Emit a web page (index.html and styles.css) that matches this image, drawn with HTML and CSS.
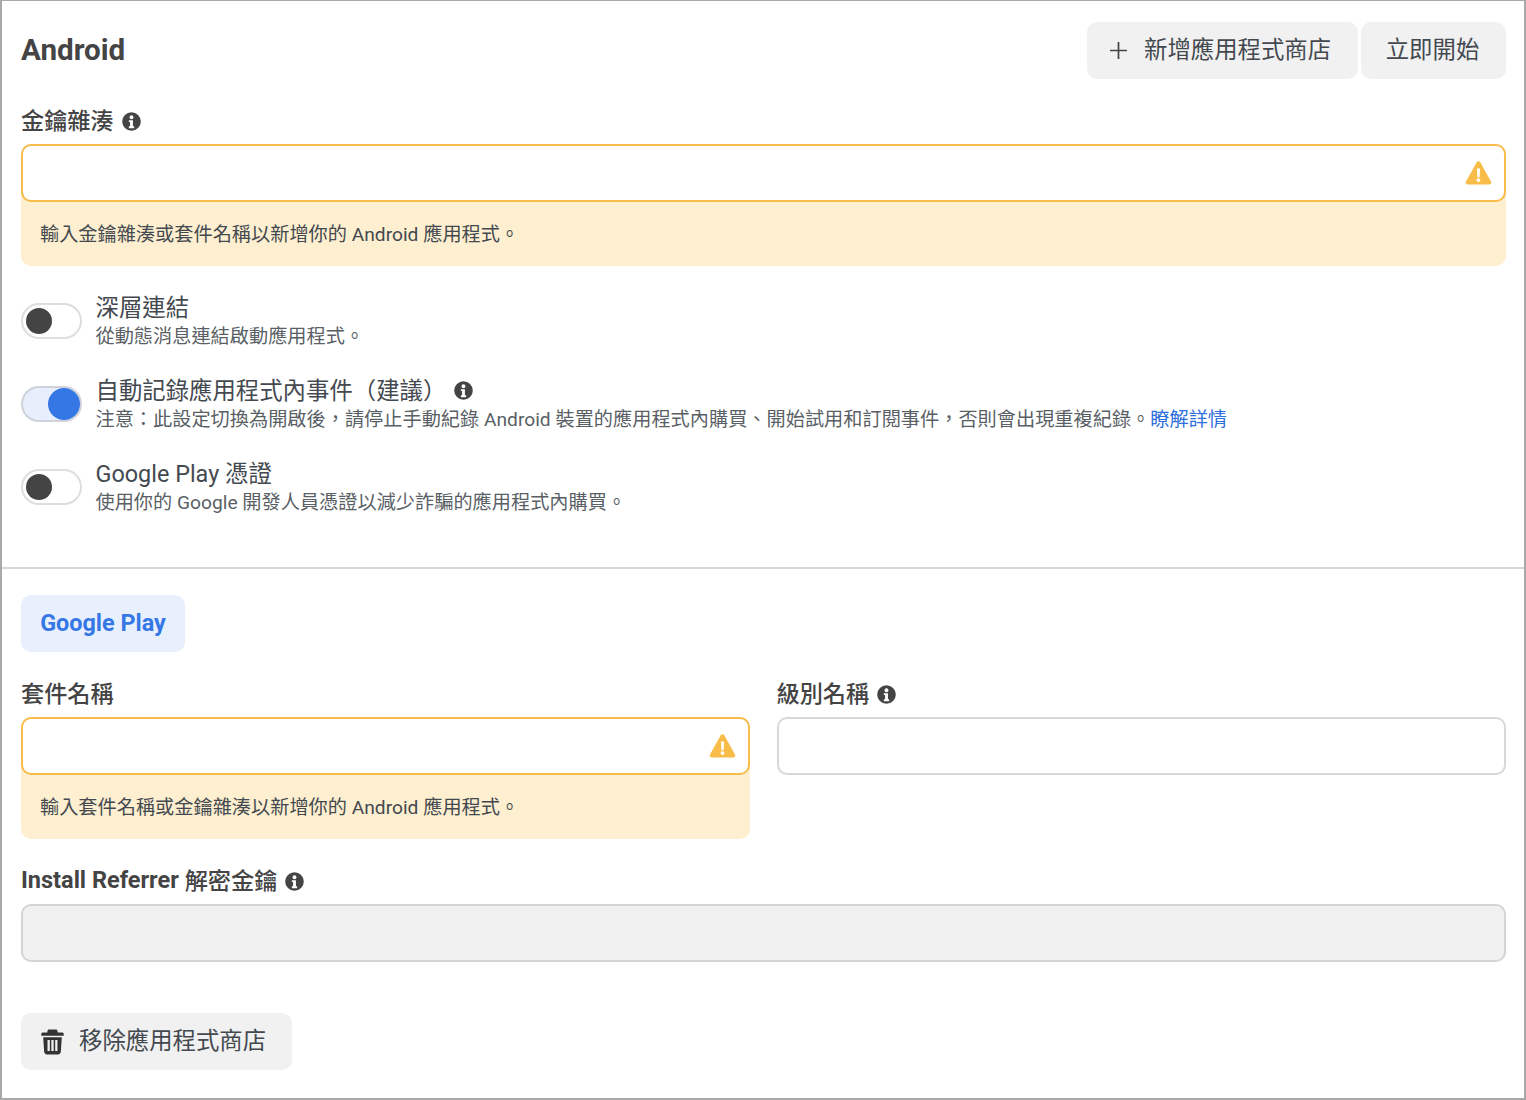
FILE: index.html
```html
<!DOCTYPE html>
<html lang="zh-Hant">
<head>
<meta charset="utf-8">
<title>Android</title>
<link rel="stylesheet" href="styles.css">
</head>
<body>
<svg class="defs" width="0" height="0" aria-hidden="true">
  <symbol id="info" viewBox="0 0 20 20"><path fill-rule="evenodd" d="M10 .2a9.800 9.800 0 1 1 0 19.600A9.800 9.800 0 0 1 10 .2ZM10 3.300a2.100 2.100 0 1 0 0 4.200 2.100 2.100 0 0 0 0-4.200ZM7.200 8.700v1.900h1.300v4.500H7.200V17h5.600v-1.900h-1.300V8.700Z"/></symbol>
  <symbol id="warn" viewBox="0 0 26 24"><path fill-rule="evenodd" d="M11.200 1.300a2.100 2.100 0 0 1 3.600 0l10.700 19.300c.7 1.300-.2 2.900-1.800 2.900H2.300c-1.600 0-2.500-1.600-1.800-2.900ZM11.400 7.500l.5 8.700h2.200l.5-8.700ZM13 17.200a1.900 1.900 0 1 0 0 3.800 1.900 1.900 0 0 0 0-3.800Z"/></symbol>
</svg>
<main class="page">
  <section class="top">
    <header class="head">
      <h1 class="title">Android</h1>
      <div class="actions">
        <button class="btn btn-add"><svg class="plus" viewBox="0 0 18 18"><path d="M9 0v18M0 9h18"/></svg><span>新增應用程式商店</span></button>
        <button class="btn btn-start"><span>立即開始</span></button>
      </div>
    </header>

    <div class="field field-first">
      <label class="label">金鑰雜湊<svg class="info"><use href="#info"/></svg></label>
      <div class="input warn-input"><svg class="warn"><use href="#warn"/></svg></div>
      <div class="msg">輸入金鑰雜湊或套件名稱以新增你的 Android 應用程式。</div>
    </div>

    <div class="toggles">
      <div class="row">
        <div class="switch"><span class="knob"></span></div>
        <div class="row-text">
          <div class="row-title">深層連結</div>
          <div class="row-sub">從動態消息連結啟動應用程式。</div>
        </div>
      </div>
      <div class="row">
        <div class="switch on"><span class="knob"></span></div>
        <div class="row-text">
          <div class="row-title">自動記錄應用程式內事件（建議）<svg class="info info-row"><use href="#info"/></svg></div>
          <div class="row-sub">注意：此設定切換為開啟後，請停止手動紀錄 Android 裝置的應用程式內購買、開始試用和訂閱事件，否則會出現重複紀錄。<a class="link" href="#">瞭解詳情</a></div>
        </div>
      </div>
      <div class="row">
        <div class="switch"><span class="knob"></span></div>
        <div class="row-text">
          <div class="row-title">Google Play 憑證</div>
          <div class="row-sub">使用你的 Google 開發人員憑證以減少詐騙的應用程式內購買。</div>
        </div>
      </div>
    </div>
  </section>

  <section class="bottom">
    <div class="tab">Google Play</div>
    <div class="cols">
      <div class="field">
        <label class="label">套件名稱</label>
        <div class="input warn-input"><svg class="warn"><use href="#warn"/></svg></div>
        <div class="msg">輸入套件名稱或金鑰雜湊以新增你的 Android 應用程式。</div>
      </div>
      <div class="field">
        <label class="label">級別名稱<svg class="info"><use href="#info"/></svg></label>
        <div class="input"></div>
      </div>
    </div>
    <div class="field field-install">
      <label class="label"><span class="latin-bold">Install Referrer&nbsp;</span>解密金鑰<svg class="info"><use href="#info"/></svg></label>
      <div class="input disabled"></div>
    </div>
    <button class="btn btn-remove">
      <svg class="trash" viewBox="0 0 24 26"><path fill-rule="evenodd" d="M8.500 0h7c1 0 1.700.7 1.800 1.700L17.400 3H22c1 0 1.700.6 1.700 1.500V6.500H.3V4.500C.3 3.600 1 3 2 3h4.600l.1-1.300C6.800.7 7.500 0 8.500 0ZM2.300 8h19.400l-1 15.300c-.1 1.500-1.300 2.700-2.800 2.700H6.100c-1.500 0-2.700-1.200-2.800-2.700ZM6.800 11v11.500h2.400V11Zm4 0v11.500h2.400V11Zm4 0v11.500h2.400V11Z"/></svg>
      <span>移除應用程式商店</span>
    </button>
  </section>
</main>
</body>
</html>
```

FILE: styles.css
```css
* { box-sizing: border-box; }
html, body { margin: 0; padding: 0; background: #fff; }
body {
  width: 1526px;
  height: 1100px;
  overflow: hidden;
  font-family: Roboto, "Noto Sans CJK TC", sans-serif;
  color: #444950;
}
.defs { position: absolute; }
.page {
  width: 1526px;
  height: 1100px;
  border: solid #a9a9a9;
  border-width: 1px 2px 2px 2px;
}
.top { padding: 21px 18px 0 19px; height: 566px; }
.head { display: flex; justify-content: space-between; align-items: center; height: 57px; }
.title { margin: 0; font-size: 29.600px; font-weight: 700; color: #444; line-height: 63px; }
.actions { display: flex; gap: 3px; }
.btn {
  display: flex;
  align-items: center;
  height: 57px;
  border: 0;
  border-radius: 10px;
  background: #f1f1f1;
  color: #444950;
  font: 400 23.400px Roboto, "Noto Sans CJK TC", sans-serif;
  padding: 0;
}
.btn span { margin-bottom: 6px; }
.btn-add { width: 271px; padding-left: 23px; }
.btn-start { width: 145px; padding-right: 2px; justify-content: center; }
.plus { width: 17px; height: 17px; margin-right: 17px; fill: none; stroke: #444; stroke-width: 1.800; }
.field-first { margin-top: 28px; }
.label {
  display: flex;
  align-items: center;
  height: 28px;
  padding-bottom: 4px;
  margin-bottom: 9px;
  font-size: 23.200px;
  font-weight: 500;
  color: #444;
  white-space: nowrap;
}
.latin-bold { font-size: 23.500px; font-weight: 700; margin-top: 2px; }
.info { width: 19px; height: 19px; margin: 4px 0 0 8px; fill: #444; flex: none; }
.input {
  position: relative;
  height: 58px;
  border: 2px solid #d8d8d8;
  border-radius: 10px;
  background: #fff;
}
.warn-input { border-color: #f8bc48; z-index: 1; }
.disabled { background: #f1f1f1; border-color: #d4d4d4; }
.warn {
  position: absolute;
  right: 12px;
  top: 15px;
  width: 27px;
  height: 24px;
  fill: #f8bc48;
}
.msg {
  margin-top: -10px;
  height: 74px;
  padding: 8px 19px 0;
  display: flex;
  align-items: center;
  background: #fdefcf;
  border-radius: 0 0 10px 10px;
  font-size: 19.200px;
  color: #444950;
  white-space: nowrap;
}
.toggles { margin-top: 26px; display: flex; flex-direction: column; gap: 25px; }
.row { display: flex; align-items: center; gap: 13.500px; height: 58px; }
.switch {
  position: relative;
  width: 61px;
  height: 36px;
  flex: none;
  border: 2px solid #dedede;
  border-radius: 18px;
  background: #fff;
}
.knob {
  position: absolute;
  left: 3px;
  top: 3px;
  width: 26px;
  height: 26px;
  border-radius: 50%;
  background: #444;
}
.switch.on { background: #e8effc; border-color: #cfd2da; }
.switch.on .knob { left: 25px; top: 0; width: 32px; height: 32px; background: #3578e5; }
.row-text { min-width: 0; }
.row-title { display: flex; align-items: center; height: 29px; padding-bottom: 2px; font-size: 23.400px; color: #444950; white-space: nowrap; }
.info-row { margin: 4px 0 0 8px; }
.row-sub { height: 29px; line-height: 32px; font-size: 19.200px; color: #5a5f66; white-space: nowrap; }
.link { color: #2d6fdc; text-decoration: none; }
.bottom { border-top: 2px solid #d6d6d6; padding: 26px 18px 0 19px; }
.tab {
  display: flex;
  align-items: center;
  justify-content: center;
  width: 164px;
  height: 57px;
  padding-bottom: 2px;
  border-radius: 10px;
  background: #e9f0fd;
  color: #3578e5;
  font-size: 23.400px;
  font-weight: 700;
}
.cols { display: grid; grid-template-columns: 729px 729.500px; column-gap: 26.500px; margin-top: 28px; }
.field-install { margin-top: 28px; }
.btn-remove { width: 271px; margin-top: 51px; padding-left: 20px; }
.trash { width: 23px; height: 26px; margin: 0 15px 0 0; fill: #333; flex: none; }
```
